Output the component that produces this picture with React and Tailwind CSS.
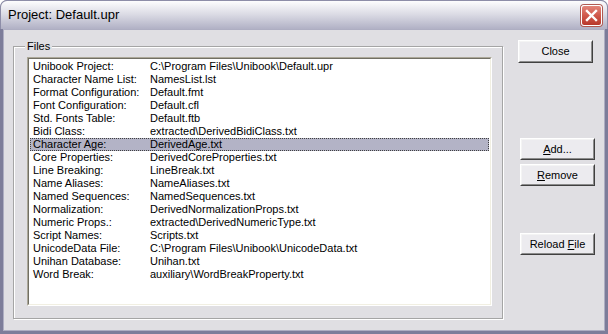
const rows = [
  ['Unibook Project:', 'C:\\Program Files\\Unibook\\Default.upr'],
  ['Character Name List:', 'NamesList.lst'],
  ['Format Configuration:', 'Default.fmt'],
  ['Font Configuration:', 'Default.cfl'],
  ['Std. Fonts Table:', 'Default.ftb'],
  ['Bidi Class:', 'extracted\\DerivedBidiClass.txt'],
  ['Character Age:', 'DerivedAge.txt'],
  ['Core Properties:', 'DerivedCoreProperties.txt'],
  ['Line Breaking:', 'LineBreak.txt'],
  ['Name Aliases:', 'NameAliases.txt'],
  ['Named Sequences:', 'NamedSequences.txt'],
  ['Normalization:', 'DerivedNormalizationProps.txt'],
  ['Numeric Props.:', 'extracted\\DerivedNumericType.txt'],
  ['Script Names:', 'Scripts.txt'],
  ['UnicodeData File:', 'C:\\Program Files\\Unibook\\UnicodeData.txt'],
  ['Unihan Database:', 'Unihan.txt'],
  ['Word Break:', 'auxiliary\\WordBreakProperty.txt'],
];

function Button({ children, className = '' }) {
  return (
    <div
      className={`w-[75px] border border-t-white border-l-white border-r-[#404040] border-b-[#404040] ${className}`}
    >
      <div className="h-full flex items-center justify-center border border-t-[#f4f4f4] border-l-[#f4f4f4] border-r-[#8c8c8c] border-b-[#8c8c8c] bg-[#ecebef] text-[11px] text-black">
        {children}
      </div>
    </div>
  );
}

export default function App() {
  return (
    <div
      className="w-[608px] h-[334px] flex flex-col bg-[#7d7d9a] rounded-t-[7px] overflow-hidden"
      style={{ fontFamily: '"Liberation Sans", Arial, sans-serif' }}
    >
      {/* title bar */}
      <div className="h-[29px] shrink-0 flex items-center justify-between pl-[7px] pr-[5px] rounded-t-[7px] border-t border-x border-[#8d8da8] bg-gradient-to-b from-[#fdfdfe] via-[#d9d9e3] to-[#b1b1c5]">
        <span className="text-[13px] text-black">Project: Default.upr</span>
        <div className="w-[21px] h-[21px] rounded-[3px] border border-white bg-gradient-to-b from-[#e2857a] via-[#d0594c] to-[#b8382c] flex items-center justify-center shadow-[0_0_0_1px_#b05a52]">
          <svg width="13" height="13" viewBox="0 0 13 13">
            <path d="M2 2 L11 11 M11 2 L2 11" stroke="white" strokeWidth="2.4" strokeLinecap="square" />
          </svg>
        </div>
      </div>

      {/* client area */}
      <div className="flex-1 flex mx-[3px] mb-[3px] border border-[#aeaec2] bg-[#e0dfe3] pl-[9px] pr-[9px] pt-[16px] pb-[11px]">
        {/* group box */}
        <div className="relative w-[492px] h-[273px] border border-[#a5a5a5] shadow-[inset_1px_1px_0_#ffffff,1px_1px_0_#ffffff] pt-[10px] pl-[13px]">
          <span className="absolute left-[11px] -top-[8px] px-[2px] bg-[#e0dfe3] text-[11px] text-black leading-[14px]">
            Files
          </span>
          <div className="w-[465px] h-[249px] border border-t-[#aca899] border-l-[#aca899] border-r-white border-b-white">
            <div className="h-full border border-t-[#716f64] border-l-[#716f64] border-r-[#f1efe2] border-b-[#f1efe2] bg-white pt-[1px] px-[1px]">
              {rows.map(([label, file]) => {
                const sel = label === 'Character Age:';
                return (
                  <div
                    key={label}
                    className={`h-[13px] flex items-center text-[11px] leading-[13px] text-black whitespace-nowrap ${
                      sel ? 'bg-[#b3b3c6] outline outline-1 outline-dotted outline-[#404040] -outline-offset-1' : ''
                    }`}
                  >
                    <span className="w-[120px] pl-[3px] shrink-0">{label}</span>
                    <span>{file}</span>
                  </div>
                );
              })}
            </div>
          </div>
        </div>

        {/* buttons */}
        <div className="flex flex-col ml-[15px] -mt-[6px]">
          <Button className="h-[23px]">Close</Button>
          <Button className="h-[22px] mt-[75px] ml-[2px]">
            <span><u>A</u>dd...</span>
          </Button>
          <Button className="h-[22px] mt-[4px] ml-[2px]">
            <span><u>R</u>emove</span>
          </Button>
          <Button className="h-[22px] mt-[47px] ml-[2px]">
            <span>Reload <u>F</u>ile</span>
          </Button>
        </div>
      </div>
    </div>
  );
}
